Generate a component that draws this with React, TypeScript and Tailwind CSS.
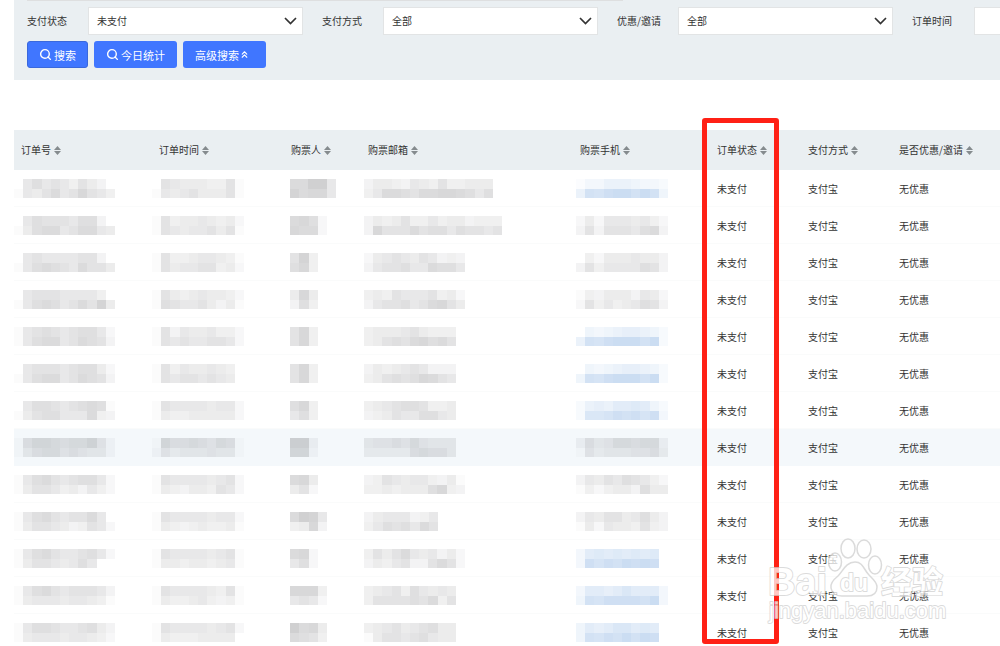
import { ChevronsUp, Search } from "lucide-react";

type Tone = "gray" | "blue";

interface MosaicProps {
  cells: string;
  tone?: Tone;
}

interface Order {
  id: string;
  time: string;
  buyer: string;
  email: string;
  phone: string;
  phoneTone?: Tone;
  active?: boolean;
}

const CELL = 9.2;

const TONES: Record<Tone, string> = {
  gray: "#0a0a10",
  blue: "#035ac2",
};

const FILTERS = [
  { id: "pay-status", label: "支付状态", value: "未支付" },
  { id: "pay-method", label: "支付方式", value: "全部" },
  { id: "discount", label: "优惠/邀请", value: "全部" },
];

const COLUMNS = [
  { title: "订单号", width: "w-[138px]" },
  { title: "订单时间", width: "w-[132px]" },
  { title: "购票人", width: "w-[77px]" },
  { title: "购票邮箱", width: "w-[212px]" },
  { title: "购票手机", width: "w-[137px]" },
  { title: "订单状态", width: "w-[91px]" },
  { title: "支付方式", width: "w-[91px]" },
  { title: "是否优惠/邀请", width: "w-auto" },
];

// Masked values: two lines of cells, each a hex digit for how dark it is
const ORDERS: Order[] = [
  { id: "06867647530/1657967a764", time: "0765554471/1656755571", buyer: "99cc6/b9aa6", email: "35543654744555/46998799aa9868", phone: "1335554332/5bacddbdb4", phoneTone: "blue" },
  { id: "06877768830/15899679965", time: "1745565452/1765667571", buyer: "9a82/a992", email: "354574464553444/3a7779788687767", phone: "2526665642/3737776893" },
  { id: "06766667730/16898769775", time: "1744566541/1756677452", buyer: "7b4/8a4", email: "25676576343/36778669886", phone: "0425556553/3746666873" },
  { id: "06777666640/168986797b5", time: "1754565542/1876675351", buyer: "5a5/384", email: "45476667452/36778679a75", phone: "1435553652/2746456873" },
  { id: "16787678862/16899679873", time: "1736556442/1767667762", buyer: "7a4/7a4", email: "4555675444/457879a897", phone: "0434566542/5bacdddbd2", phoneTone: "blue" },
  { id: "06777678852/16899679873", time: "1746556540/1767767650", buyer: "7a4/7a4", email: "3545676333/457878a976", phone: "0434566542/4bacdddbd2", phoneTone: "blue" },
  { id: "06887678981/15788666943", time: "1766665662/1544555552", buyer: "8a4/684", email: "4567887445/3457668865", phone: "2565778742/299acbcac3", phoneTone: "blue" },
  { id: "17998788a62/15788676552", time: "1977876871/2645556551", buyer: "bb3/992", email: "5667686555/4444478775", phone: "3756887883/1645556674", active: true },
  { id: "16897678862/15776453642", time: "1766665672/1543554762", buyer: "9a5/572", email: "34765664351/44545558a43", phone: "3657687642/1424553855" },
  { id: "16897677960/15776534762", time: "1766665662/1543454451", buyer: "9cb6/45a3", email: "35666346/46878697", phone: "3657756853/1526554743" },
  { id: "16897667862/15776568600", time: "1766665671/1554554561", buyer: "9a2/682", email: "47579656352/35467337972", phone: "3787878780/3cacbdcdc0", phoneTone: "blue" },
  { id: "16897677763/15666566541", time: "1766665471/1544564341", buyer: "aaa4/6762", email: "4567486565/4777787947", phone: "3776797773/4baccccbd3", phoneTone: "blue" },
  { id: "16887667853/15666566542", time: "1766665672/1544455550", buyer: "c9a5/9874", email: "4567567855/1577678655", phone: "4767997870/4bacbdbdc0", phoneTone: "blue" },
];

function Mosaic({ cells, tone = "gray" }: MosaicProps) {
  const lines = cells.split("/");
  const count = Math.max(...lines.map((line) => line.length));

  return (
    <svg
      aria-hidden="true"
      className="block"
      width={Math.round(count * CELL)}
      height={19}
      viewBox={`0 0 ${count} 2`}
      preserveAspectRatio="none"
      shapeRendering="crispEdges"
    >
      {lines.map((line, y) =>
        [...line].map((digit, x) => (
          <rect
            key={`${x}-${y}`}
            x={x}
            y={y}
            width={1}
            height={1}
            fill={TONES[tone]}
            fillOpacity={parseInt(digit, 16) * 0.016}
          />
        )),
      )}
    </svg>
  );
}

function SortIcon() {
  return (
    <svg aria-hidden="true" width="7" height="9" viewBox="0 0 7 9">
      <path d="M3.5 0 7 4H0ZM3.5 9 0 5h7Z" fill="#858b8e" />
    </svg>
  );
}

function FilterBar() {
  return (
    <form className="overflow-hidden bg-[#eaeff2] pb-3 pl-[13px]">
      <div className="h-px w-[596px] bg-[#dedfe0]" />
      <div className="mt-1.5 flex">
        {FILTERS.map((filter) => (
          <div
            key={filter.id}
            className="mr-[19px] flex shrink-0 items-center"
          >
            <label htmlFor={filter.id} className="w-[61px]">
              {filter.label}
            </label>
            <div className="relative">
              <select
                id={filter.id}
                className="h-7 w-[215px] appearance-none border border-[#e2e4e5] bg-white px-2"
              >
                <option>{filter.value}</option>
              </select>
              <svg
                aria-hidden="true"
                className="pointer-events-none absolute top-2.5 right-1.5"
                width="13"
                height="8"
                viewBox="0 0 13 8"
                fill="none"
              >
                <path d="m1 1 5.5 5.5L12 1" stroke="#333" strokeWidth="1.7" />
              </svg>
            </div>
          </div>
        ))}
        <div className="flex shrink-0 items-center">
          <label htmlFor="order-time" className="w-[62px]">
            订单时间
          </label>
          <input
            id="order-time"
            type="text"
            className="h-7 w-[215px] border border-[#e2e4e5] bg-white px-2"
          />
        </div>
      </div>
      <div className="mt-1.5 flex gap-1.5 text-[11px] text-white">
        <button
          type="button"
          className="flex h-[27px] items-center gap-0.5 rounded-[3px] border border-[#3a68dc] bg-[#4076ff] px-[11px]"
        >
          <Search size={13} strokeWidth={2.6} />
          搜索
        </button>
        <button
          type="button"
          className="flex h-[27px] items-center gap-0.5 rounded-[3px] bg-[#4076ff] px-3"
        >
          <Search size={13} strokeWidth={2.6} />
          今日统计
        </button>
        <button
          type="button"
          className="flex h-[27px] items-center rounded-[3px] bg-[#4076ff] pr-4 pl-3"
        >
          高级搜索
          <ChevronsUp size={11} strokeWidth={2.4} />
        </button>
      </div>
    </form>
  );
}

function OrderTable() {
  return (
    <table className="w-full table-fixed border-collapse text-left">
      <thead>
        <tr className="h-10 bg-[#eaeff2]">
          {COLUMNS.map((column) => (
            <th key={column.title} className={`${column.width} p-0 pl-[7px]`}>
              <button type="button" className="flex items-center gap-[3px]">
                {column.title}
                <SortIcon />
              </button>
            </th>
          ))}
        </tr>
      </thead>
      <tbody>
        {ORDERS.map((order, index) => (
          <tr
            key={index}
            className={
              order.active
                ? "h-[37px] bg-[#f4f8fb]"
                : "h-[37px] shadow-[inset_0_-1px_0_#fafbfb]"
            }
          >
            <td className="p-0">
              <Mosaic cells={order.id} />
            </td>
            <td className="p-0">
              <Mosaic cells={order.time} />
            </td>
            <td className="p-0 pl-1.5">
              <Mosaic cells={order.buyer} />
            </td>
            <td className="p-0 pl-[3px]">
              <Mosaic cells={order.email} />
            </td>
            <td className="p-0 pl-[3px]">
              <Mosaic cells={order.phone} tone={order.phoneTone} />
            </td>
            <td className="p-0 pl-[7px]">未支付</td>
            <td className="p-0 pl-[7px]">支付宝</td>
            <td className="p-0 pl-[7px]">无优惠</td>
          </tr>
        ))}
      </tbody>
    </table>
  );
}

function Watermark() {
  return (
    <svg
      aria-label="Baidu 经验"
      className="pointer-events-none absolute right-[50px] bottom-5 opacity-75"
      width="184"
      height="90"
      viewBox="0 0 184 90"
      fill="#fff"
      stroke="#cfcfcf"
      strokeWidth="1.8"
      strokeLinejoin="round"
    >
      <g strokeWidth="1.5">
        <ellipse cx="82" cy="12.500" rx="7" ry="9.500" />
        <ellipse cx="98" cy="13" rx="7" ry="9" />
        <ellipse cx="69" cy="26" rx="6.500" ry="9" />
        <ellipse cx="109" cy="29" rx="6.500" ry="9" />
        <path d="M89 26c-9 0-12 9-17 14-5 4-8 8-7 12 1 6 6 8 11 8h25c6 0 10-3 10-9 0-5-4-8-8-12-5-5-6-13-14-13Z" />
      </g>
      <g
        fontFamily="Liberation Sans, sans-serif"
        style={{ paintOrder: "stroke" }}
      >
        <text x="2" y="59" fontSize="38" fontWeight="700">
          Bai
        </text>
        <text x="74" y="55" fontSize="23" fontWeight="700">
          du
        </text>
        <text
          x="115"
          y="57"
          fontSize="31"
          fontWeight="700"
          fontFamily="Noto Sans CJK SC, sans-serif"
        >
          经验
        </text>
        <text x="3" y="82" fontSize="22">
          jingyan.baidu.com
        </text>
      </g>
    </svg>
  );
}

export default function App() {
  return (
    <main className="relative h-screen overflow-hidden bg-white pl-3.5 font-['Noto_Sans_CJK_SC',sans-serif] text-[10px] leading-4 text-[#333] [&_th]:font-normal">
      <FilterBar />
      <div className="relative mt-[50px]">
        <OrderTable />
        {/* Highlight around the order status column */}
        <div className="pointer-events-none absolute -top-3 left-[688px] h-[526px] w-[77px] rounded-[3px] border-5 border-[#ff2015]" />
      </div>
      <Watermark />
    </main>
  );
}
